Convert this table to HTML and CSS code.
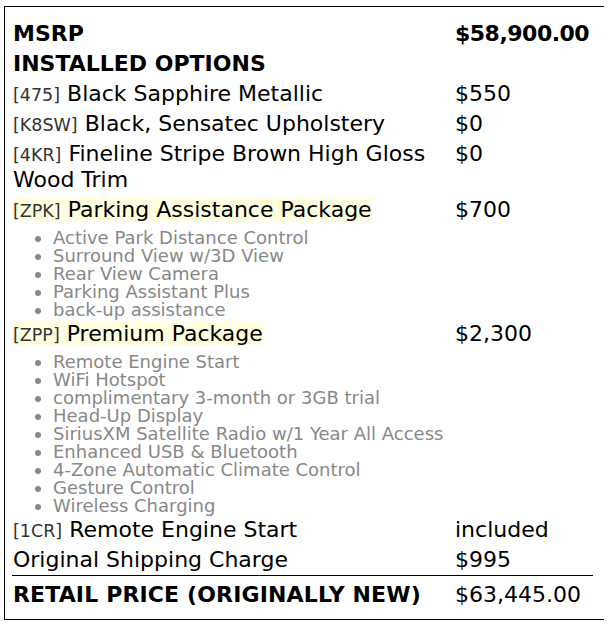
FILE: index.html
```html
<html>
<head>
<meta charset="utf-8"/>
<link rel="stylesheet" href="styles.css">
</head>
<body>

<div class="sticker">
<table class="prices">
<tr class="head"><td class="item">MSRP</td><td class="price msrp">$58,900.00</td></tr>
<tr class="head"><td class="item" colspan="2">INSTALLED OPTIONS</td></tr>
<tr><td class="item"><span class="code">[475]</span> Black Sapphire Metallic</td><td class="price">$550</td></tr>
<tr><td class="item"><span class="code">[K8SW]</span> Black, Sensatec Upholstery</td><td class="price">$0</td></tr>
<tr><td class="item"><span class="code">[4KR]</span> Fineline Stripe Brown High Gloss Wood Trim</td><td class="price">$0</td></tr>
<tr class="package">
<td class="item"><span class="pkg"><span class="code">[ZPK]</span> Parking Assistance Package</span>
<ul class="features">
<li>Active Park Distance Control</li>
<li>Surround View w/3D View</li>
<li>Rear View Camera</li>
<li>Parking Assistant Plus</li>
<li>back-up assistance</li>
</ul>
</td>
<td class="price">$700</td>
</tr>
<tr class="package">
<td class="item"><span class="pkg"><span class="code">[ZPP]</span> Premium Package</span>
<ul class="features">
<li>Remote Engine Start</li>
<li>WiFi Hotspot</li>
<li>complimentary 3-month or 3GB trial</li>
<li>Head-Up Display</li>
<li>SiriusXM Satellite Radio w/1 Year All Access</li>
<li>Enhanced USB &amp; Bluetooth</li>
<li>4-Zone Automatic Climate Control</li>
<li>Gesture Control</li>
<li>Wireless Charging</li>
</ul>
</td>
<td class="price">$2,300</td>
</tr>
<tr><td class="item"><span class="code">[1CR]</span> Remote Engine Start</td><td class="price">included</td></tr>
<tr><td class="item">Original Shipping Charge</td><td class="price">$995</td></tr>
<tr class="total"><td class="item">RETAIL PRICE (ORIGINALLY NEW)</td><td class="price">$63,445.00</td></tr>
</table>
</div>

</body>
</html>
```

FILE: styles.css
```css
/* Window sticker */
body
	{margin:6px 4px 4px 4px;
	background-color:#FFFFFF;
	font-family:"DejaVu Sans",sans-serif;
	color:#000000;}
.sticker
	{border:1px solid #000000;
	width:601px;
	height:614px;
	padding:12px 0 0 7px;
	box-sizing:border-box;}
.prices
	{border-collapse:collapse;
	table-layout:fixed;
	width:581px;
	font-size:22px;
	line-height:26px;}
.prices td
	{padding:2px 1px;
	vertical-align:top;}
.prices .package td
	{padding-bottom:0;}
.item
	{width:440px;}
.head td
	{font-weight:bold;}
.msrp
	{letter-spacing:-0.5px;}
.code
	{font-size:17.5px;
	line-height:1;
	color:#333333;}
.pkg
	{background-color:#FFFFE0;}
.features
	{margin:6px 0 0 0;
	padding-left:40px;
	font-size:18px;
	line-height:18px;
	color:#888888;}
.prices .total td
	{border-top:1px solid #000000;
	padding-top:6px;}
.total .item
	{font-weight:bold;
	letter-spacing:0.14px;}
```
